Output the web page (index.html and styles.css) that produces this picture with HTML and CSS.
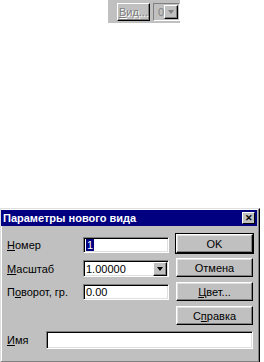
FILE: index.html
```html
<!DOCTYPE html>
<html lang="ru">
<head>
  <meta charset="UTF-8" />
  <title>Параметры нового вида</title>
  <link rel="stylesheet" href="styles.css">
</head>
<body>
  <div class="toolbar">
    <div class="tb-btn"><u>В</u>ид...</div>
    <div class="tb-combo">
      <span class="tb-val">0</span>
      <span class="arrow-btn"><span class="tri"></span></span>
    </div>
  </div>

  <div class="dialog">
    <div class="titlebar">
      <span class="title">Параметры нового вида</span>
      <span class="close">&#x2715;</span>
    </div>
    <div class="body">
      <div class="main">
        <div class="fields">
          <div class="row">
            <label><u>Н</u>омер</label>
            <div class="field"><span class="sel">1</span></div>
          </div>
          <div class="row">
            <label><u>М</u>асштаб</label>
            <div class="field combo">
              <span>1.00000</span>
              <span class="arrow-btn"><span class="tri"></span></span>
            </div>
          </div>
          <div class="row">
            <label>П<u>о</u>ворот, гр.</label>
            <div class="field"><span>0.00</span></div>
          </div>
        </div>
        <div class="buttons">
          <div class="btn default">OK</div>
          <div class="btn">Отмена</div>
          <div class="btn"><u>Ц</u>вет...</div>
          <div class="btn">С<u>п</u>равка</div>
        </div>
      </div>
      <div class="name-row">
        <label><u>И</u>мя</label>
        <div class="field wide"></div>
      </div>
    </div>
  </div>
</body>
</html>
```

FILE: styles.css
```css
:root {
  --face: #c0c0c0;
  --shadow: #808080;
  --navy: #000080;
  --font: 'Liberation Sans', Arial, sans-serif;
}
* {
  box-sizing: border-box;
}
body {
  margin: 0;
  background: #fff;
  font-family: var(--font);
  font-size: 11px;
  color: #000;
}
u {
  text-decoration: underline;
  text-underline-offset: 1px;
}

/* toolbar at the top */
.toolbar {
  margin-left: 108px;
  width: 72px;
  height: 23px;
  background: var(--face);
  display: flex;
  align-items: center;
  gap: 3px;
  padding-left: 9px;
}
.tb-btn {
  width: 38px;
  height: 18px;
  display: flex;
  align-items: center;
  justify-content: center;
  color: var(--shadow);
  text-shadow: 1px 1px #fff;
  border: 1px solid;
  border-color: #fff #000 #000 #fff;
  box-shadow: inset -1px -1px var(--shadow);
}
.tb-combo {
  flex: 1;
  height: 18px;
  display: flex;
  align-items: center;
  justify-content: space-between;
  padding: 0 1px 0 4px;
  border: 1px solid;
  border-color: var(--shadow) #fff #fff var(--shadow);
  color: var(--shadow);
}

.arrow-btn {
  width: 14px;
  height: 14px;
  background: var(--face);
  display: flex;
  align-items: center;
  justify-content: center;
  border: 1px solid;
  border-color: #fff #000 #000 #fff;
  box-shadow: inset -1px -1px var(--shadow);
}
.tri {
  width: 0;
  height: 0;
  border-left: 3px solid transparent;
  border-right: 3px solid transparent;
  border-top: 4px solid #000;
}
.tb-combo .tri {
  border-top-color: var(--shadow);
}

/* dialog */
.dialog {
  margin-top: 185px;
  width: 260px;
  background: var(--face);
  border: 1px solid;
  border-color: #dfdfdf #000 #000 #dfdfdf;
  box-shadow: inset -1px -1px var(--shadow), inset 1px 1px #fff;
  padding: 1px 2px 2px 0;
}
.titlebar {
  height: 16px;
  background: var(--navy);
  display: flex;
  align-items: center;
  justify-content: space-between;
  padding: 0 2px 0 2px;
}
.title {
  color: #fff;
  font-weight: bold;
  font-size: 11px;
}
.close {
  width: 13px;
  height: 12px;
  background: var(--face);
  font-size: 9px;
  font-weight: bold;
  line-height: 10px;
  text-align: center;
  border: 1px solid;
  border-color: #fff #000 #000 #fff;
}

.body {
  padding: 8px 4px 11px 6px;
}
.main {
  display: flex;
  justify-content: space-between;
}
.fields {
  display: flex;
  flex-direction: column;
  gap: 7px;
  padding-top: 3px;
}
.row {
  display: flex;
  align-items: center;
}
.row label {
  width: 76px;
}
.field {
  width: 86px;
  height: 16px;
  background: #fff;
  display: flex;
  align-items: center;
  justify-content: space-between;
  padding: 0 1px 0 2px;
  border: 1px solid;
  border-color: var(--shadow) #fff #fff var(--shadow);
  box-shadow: inset 1px 1px #000, inset -1px -1px #dfdfdf;
}
.field.combo {
  height: 17px;
}
.sel {
  background: var(--navy);
  color: #fff;
  padding: 0 1px;
}
.buttons {
  display: flex;
  flex-direction: column;
  gap: 5px;
}
.btn {
  width: 77px;
  height: 19px;
  display: flex;
  align-items: center;
  justify-content: center;
  border: 1px solid;
  border-color: #fff #000 #000 #fff;
  box-shadow: inset -1px -1px var(--shadow), inset 1px 1px #dfdfdf;
}
.btn.default {
  outline: 1px solid #000;
}

.name-row {
  display: flex;
  align-items: center;
  margin-top: 6px;
}
.name-row label {
  width: 39px;
}
.field.wide {
  width: 208px;
  height: 18px;
}
```
